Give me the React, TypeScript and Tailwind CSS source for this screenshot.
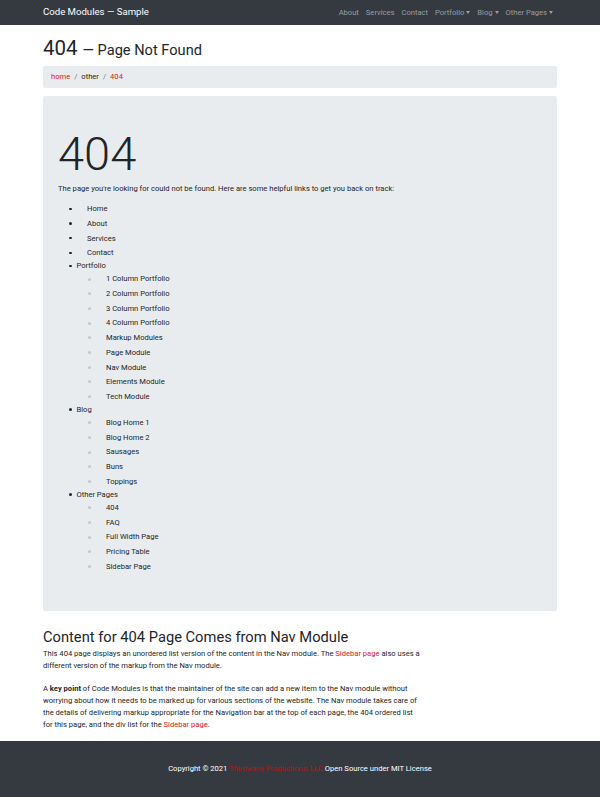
import React from "react";

type Item = { label: string; children?: string[] };

const navLinks = ["About", "Services", "Contact"];
const navMenus = ["Portfolio", "Blog", "Other Pages"];

const siteMap: Item[] = [
  { label: "Home" },
  { label: "About" },
  { label: "Services" },
  { label: "Contact" },
  {
    label: "Portfolio",
    children: [
      "1 Column Portfolio",
      "2 Column Portfolio",
      "3 Column Portfolio",
      "4 Column Portfolio",
      "Markup Modules",
      "Page Module",
      "Nav Module",
      "Elements Module",
      "Tech Module",
    ],
  },
  { label: "Blog", children: ["Blog Home 1", "Blog Home 2", "Sausages", "Buns", "Toppings"] },
  { label: "Other Pages", children: ["404", "FAQ", "Full Width Page", "Pricing Table", "Sidebar Page"] },
];

function Caret() {
  return <span className="ml-[2px] inline-block h-0 w-0 border-x-[2.5px] border-t-[3px] border-x-transparent border-t-current" />;
}

function Navbar() {
  return (
    <nav className="h-[25px] bg-[#343a40]">
      <div className="mx-[43px] flex h-full items-center justify-between">
        <a className="text-[9.6px] text-white">Code Modules — Sample</a>
        <ul className="mr-[4px] flex items-center gap-[7px] text-[7.6px] text-[#9a9da1]">
          {navLinks.map((l) => (
            <li key={l}>{l}</li>
          ))}
          {navMenus.map((l) => (
            <li key={l} className="flex items-center">
              {l}
              <Caret />
            </li>
          ))}
        </ul>
      </div>
    </nav>
  );
}

function SiteMap() {
  return (
    <ul className="ml-[11px] text-[7.6px] text-[#212529]">
      {siteMap.map((item) =>
        item.children ? (
          <li key={item.label}>
            <div className="flex h-[11.5px] items-center">
              <span className="h-[2.5px] w-[2.5px] rounded-full bg-[#212529]" />
              <span className="ml-[5px]">{item.label}</span>
            </div>
            <ul className="ml-[19px]">
              {item.children.map((c) => (
                <li key={c} className="flex h-[14.7px] items-center">
                  <span className="h-[3px] w-[3px] rounded-full bg-[#c4c7cb]" />
                  <a className="ml-[15px]">{c}</a>
                </li>
              ))}
            </ul>
          </li>
        ) : (
          <li key={item.label} className="flex h-[14.7px] items-center">
            <span className="h-[2.5px] w-[2.5px] rounded-full bg-[#212529]" />
            <a className="ml-[15.5px]">{item.label}</a>
          </li>
        )
      )}
    </ul>
  );
}

export default function App() {
  return (
    <div className="min-h-[797px] bg-white font-['Roboto','Liberation_Sans',sans-serif] text-[#212529]">
      <Navbar />
      <main className="mx-[43px]">
        <h1 className="mt-[13px] flex items-baseline leading-none">
          <span className="text-[20.5px]">404</span>
          <span className="ml-[5px] text-[14.6px]">— Page Not Found</span>
        </h1>
        <ol className="mt-[7px] flex h-[22px] items-center gap-[4px] rounded-[2px] bg-[#e9ecef] px-[8px] text-[7.6px]">
          <li className="text-[#e0161b]">home</li>
          <li className="text-[#6c757d]">/</li>
          <li>other</li>
          <li className="text-[#6c757d]">/</li>
          <li className="text-[#e0161b]">404</li>
        </ol>
        <section className="mt-[8px] h-[515px] rounded-[2px] bg-[#e9ecef] px-[15px] pt-[34px]">
          <h2 className="text-[47px] font-light leading-none">404</h2>
          <p className="mt-[6px] text-[7.6px] leading-[12px]">
            The page you're looking for could not be found. Here are some helpful links to get you back on track:
          </p>
          <div className="mt-[7px]">
            <SiteMap />
          </div>
        </section>
        <section className="max-w-[378px] pb-[10px] pt-[16px] text-[7.6px] leading-[12px]">
          <h2 className="text-[14.7px] leading-[20px]">Content for 404 Page Comes from Nav Module</h2>
          <p className="mt-[1px]">
            This 404 page displays an unordered list version of the content in the Nav module. The{" "}
            <a className="text-[#e0161b]">Sidebar page</a> also uses a different version of the markup from the Nav module.
          </p>
          <p className="mt-[11px]">
            A <strong className="font-bold">key point</strong> of Code Modules is that the maintainer of the site can add a new item to the Nav module
            without worrying about how it needs to be marked up for various sections of the website. The Nav module takes care
            of the details of delivering markup appropriate for the Navigation bar at the top of each page, the 404 ordered list
            for this page, and the div list for the <a className="text-[#e0161b]">Sidebar page</a>.
          </p>
        </section>
      </main>
      <footer className="flex h-[56px] items-center justify-center bg-[#343a40] text-[7.6px] text-white">
        <p>
          Copyright © 2021 <a className="text-[#b81418]">Thirdwave Productions, LLC</a> Open Source under MIT License
        </p>
      </footer>
    </div>
  );
}
